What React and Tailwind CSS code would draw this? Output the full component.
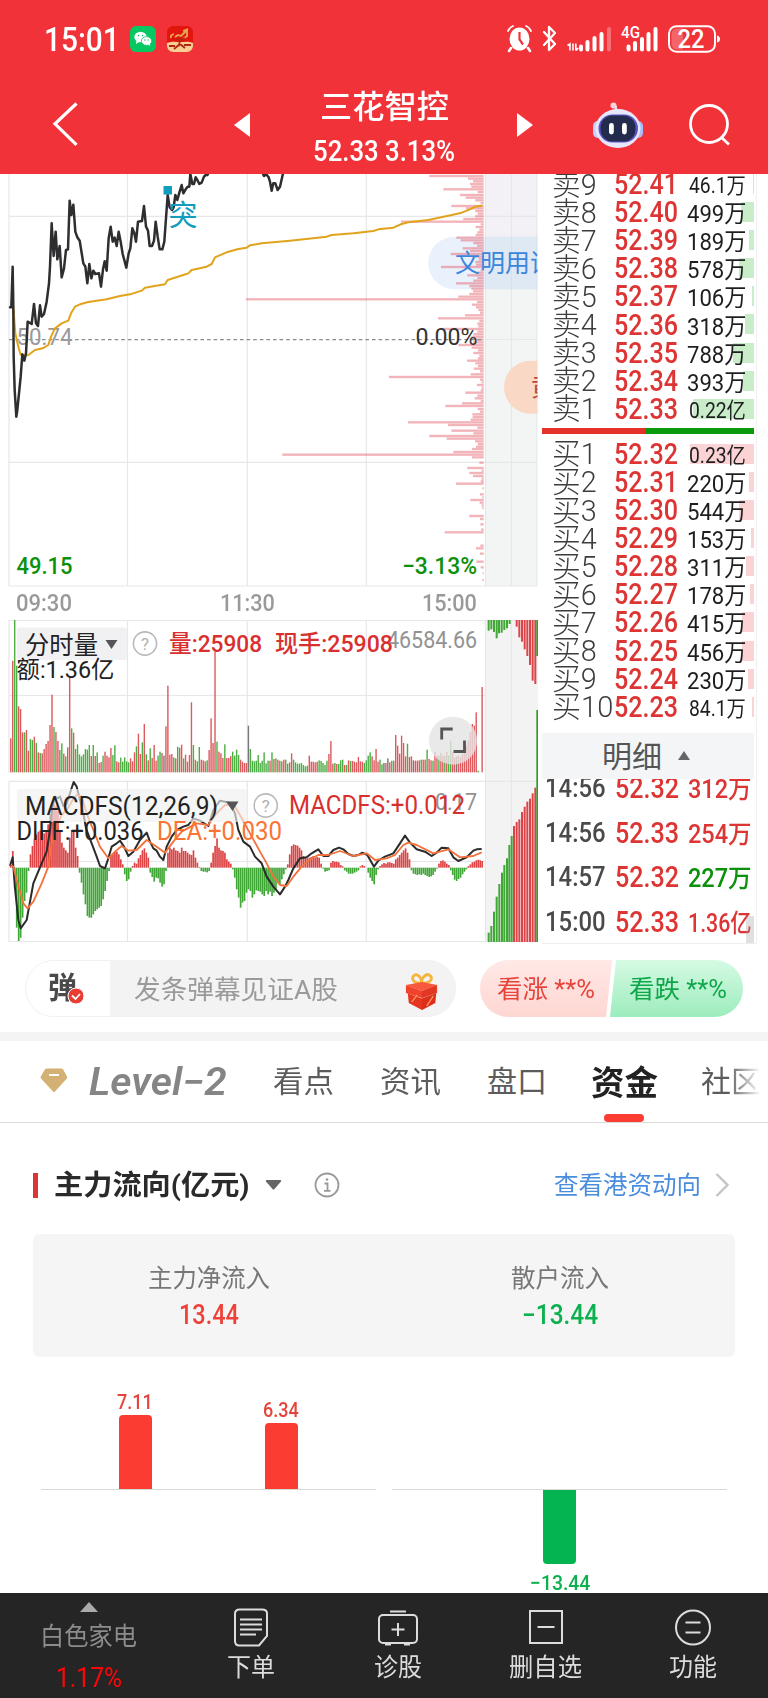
import React, { useLayoutEffect, useRef, useState } from "react"

const RED = "#dc5a5e"
const GREEN = "#4cae43"

const sells = [
  ["卖9", "52.41", "46.1万", 1],
  ["卖8", "52.40", "499万", 13],
  ["卖7", "52.39", "189万", 5],
  ["卖6", "52.38", "578万", 15],
  ["卖5", "52.37", "106万", 2],
  ["卖4", "52.36", "318万", 9],
  ["卖3", "52.35", "788万", 21],
  ["卖2", "52.34", "393万", 11],
  ["卖1", "52.33", "0.22亿", 61]
]

const buys = [
  ["买1", "52.32", "0.23亿", 64],
  ["买2", "52.31", "220万", 5],
  ["买3", "52.30", "544万", 15],
  ["买4", "52.29", "153万", 3],
  ["买5", "52.28", "311万", 8],
  ["买6", "52.27", "178万", 4],
  ["买7", "52.26", "415万", 12],
  ["买8", "52.25", "456万", 12],
  ["买9", "52.24", "230万", 6],
  ["买10", "52.23", "84.1万", 2]
]

const trades = [
  ["14:56", "52.32", "312万", "up"],
  ["14:56", "52.33", "254万", "up"],
  ["14:57", "52.32", "227万", "down"],
  ["15:00", "52.33", "1.36亿", "up"]
]

// volume at price, [y, left end]
const profile = [
  [18, 568], [26, 684], [34, 699], [42, 690], [50, 694], [58, 610], [66, 713], [75, 660], [83, 677],
  [91, 706], [99, 722], [108, 634], [115, 678], [123, 706], [131, 713], [139, 705], [147, 670],
  [155, 483], [163, 722], [171, 707], [179, 718], [187, 712], [195, 707], [203, 649], [211, 662],
  [219, 700], [227, 711], [235, 668], [243, 690], [252, 632], [260, 705], [268, 716], [276, 706],
  [284, 708], [291, 603], [300, 722], [308, 711], [316, 682], [324, 712], [332, 700], [340, 648],
  [348, 688], [356, 694], [364, 699], [372, 688], [380, 655], [388, 18], [396, 711], [404, 696],
  [412, 708], [420, 715], [428, 720], [436, 675], [445, 594], [453, 718], [461, 712], [469, 715],
  [477, 605], [485, 712], [493, 700], [501, 694], [509, 705], [517, 700], [525, 655], [533, 695],
  [541, 714], [549, 700], [557, 718], [565, 714], [572, 681], [580, 706], [588, 714], [596, 702],
  [604, 720], [613, 692], [621, 447], [629, 720], [637, 725], [645, 711], [653, 725], [661, 722],
  [668, 676], [677, 712], [685, 704], [693, 722], [700, 666], [708, 616], [717, 713], [725, 720],
  [733, 697], [741, 698], [749, 692], [757, 504], [765, 624], [773, 712], [782, 634], [790, 700],
  [798, 568], [806, 620], [814, 705], [822, 714], [830, 708], [837, 696], [846, 640], [854, 127],
  [862, 696], [878, 718], [894, 682], [902, 725], [909, 688], [918, 699], [926, 725], [934, 722],
  [941, 648], [955, 727], [973, 720], [982, 727], [990, 691], [998, 719], [1006, 725], [1014, 727],
  [1038, 688], [1047, 720], [1063, 721], [1079, 723], [1087, 614], [1127, 721], [1135, 708],
  [1151, 720], [1175, 709], [1192, 722], [1210, 728], [1230, 727]
]

const volumes = (
  "r102 r335 g460 g320 r198 r190 r120 g120 r127 r65 g100 g97 r107 g88 r60 g58 r57 r70 r85 r94 r142 r233 g136 r121 " +
  "r94 g67 g87 r56 g48 r75 r285 g132 r119 g70 g84 g54 g48 g54 g70 g68 g82 r49 g82 r49 g60 r28 r31 g50 r62 r50 r45 " +
  "r73 g52 g81 r33 r30 g44 g32 g45 g33 g30 r42 r33 r60 g78 r116 r55 g90 r145 g54 r36 g72 r43 r82 r35 g50 g62 r58 " +
  "k50 r138 r260 r53 r55 g45 r42 g77 r74 r83 g42 r53 r32 r52 r210 g82 r38 g33 g76 r38 r36 r33 g36 r67 r162 r88 " +
  "r362 g92 r62 r57 r43 g84 r43 r43 r49 g62 g50 g68 g52 r38 r32 r28 r28 k140 g70 g35 g33 g35 g52 g28 g35 g60 g27 " +
  "g35 r35 g60 r40 g42 r38 g35 r33 r38 g38 g26 r30 r57 g38 g30 g26 g26 g28 g22 g18 g20 r50 r32 r32 r30 r32 g36 " +
  "g34 g28 g22 g35 r55 r94 r26 g28 r25 g25 g36 g38 r22 g22 r36 g34 r34 r32 r30 r46 r33 r32 g28 g36 g50 g60 r48 " +
  "r36 r70 r32 g38 g24 k28 r28 k42 r30 g35 r35 r112 r80 r56 r110 r88 r48 g86 r46 r48 k36 r35 r35 r36 g38 r38 r38 " +
  "g68 r40 r36 g35 r62 r50 g50 r58 r50 g50 r62 g50 g95 r60 r45 k48 r50 r46 r55 r70 r80 r95 r120 r145 r140 r180 " +
  "g5 g0 r256"
).split(" ")

const macd = [
  5, 50, -60, -180, -220, -210, -150, -100, -75, -10, 40, 65, 85, 100, 108, 112, 108, 103, 110, 130, 160, 195,
  190, 185, 170, 112, 75, 60, 52, 45, 90, 113, 110, 60, 35, -15, -45, -80, -110, -145, -150, -150, -140, -130,
  -125, -120, -115, -95, -70, -40, -10, 35, 40, 48, 48, 40, 25, 10, -20, -40, -35, -12, 5, 15, 12, 28, 38, 52,
  58, 45, 30, -15, -28, -42, -30, -32, -45, -57, -50, -10, 45, 60, 55, 60, 52, 50, 45, 60, 50, 50, 45, 40, 38,
  52, 30, 15, 2, -10, -12, -12, -14, -10, 15, 45, 65, 88, 60, 52, 50, 45, 25, 18, 12, -5, -30, -65, -90, -120,
  -105, -100, -75, -65, -70, -90, -80, -68, -70, -72, -80, -85, -70, -80, -72, -85, -75, -65, -45, -50, -35,
  -20, -5, 10, 40, 65, 70, 68, 66, 60, 52, 35, 30, 28, 30, 32, 35, 30, 32, 30, 12, -3, -12, -10, -8, 15, 20, 18,
  18, 16, 8, 4, -8, -12, -18, -18, -18, -15, -12, -8, 4, 8, 5, 0, -15, -30, -40, -50, -22, -5, 5, 10, 14, 12,
  16, 16, 14, 12, 25, 30, 38, 45, 52, 58, 45, 25, -8, -18, -20, -22, -20, -22, -18, -22, -25, -28, -26, -22,
  -12, -3, 12, 20, 22, 18, 12, 8, -8, -22, -36, -40, -34, -30, -20, -12, -5, 5, 10, 16, 18, 22, 24, 22, 20
]

const priceLine =
  "30,412 34,412 38,290 40,412 41,560 44,660 49,740 52,720 56,680 62,620 67,553 73,572 78,550 83,455 95,462 102,402 108,460 114,468 120,406 125,440 132,432 140,395 147,340 150,290 155,160 161,258 167,185 172,268 179,228 185,322 192,295 198,240 204,238 209,92 214,135 220,104 226,185 232,202 239,212 250,280 256,290 262,340 268,282 274,325 280,302 286,312 297,310 303,350 309,298 314,274 320,302 326,205 332,170 338,215 344,203 350,228 356,185 362,215 368,252 379,293 386,250 391,235 397,175 403,190 408,215 414,155 426,153 432,108 438,170 444,182 449,228 456,228 462,212 467,155 473,200 479,238 487,238 493,215 503,75 509,112 516,120 521,112 526,75 532,90 538,68 545,45 550,70 557,58 563,50 568,50 571,12 577,42 582,42 587,22 592,30 598,42 605,38 612,20 617,15 622,15 628,5 700,-60 786,5 792,18 798,12 806,22 810,35 815,62 820,40 826,40 833,60 840,50 848,15 852,0"

const avgLine =
  "40,412 46,490 55,530 62,554 75,556 85,555 105,540 128,535 145,525 153,500 165,475 185,460 205,452 213,430 225,410 240,403 265,396 320,388 360,378 390,373 425,362 435,353 460,349 495,343 503,330 550,315 565,310 575,300 620,290 635,282 645,262 680,247 715,237 740,233 750,226 785,220 870,212 980,200 995,195 1060,190 1120,183 1135,178 1180,173 1205,162 1225,157 1285,150 1345,137 1385,128 1410,118 1425,110 1445,107"

const diffLine =
  "30,858 38,832 45,925 55,1020 62,1045 80,1020 100,910 125,850 140,815 150,750 157,680 165,650 172,655 180,650 190,678 200,672 213,630 221,606 230,620 240,660 250,700 258,745 275,790 290,830 300,858 315,865 325,835 335,800 350,790 360,782 372,800 385,828 400,815 420,780 440,758 450,785 460,805 470,812 480,830 490,840 500,800 515,770 530,750 550,740 565,735 580,715 600,722 625,738 640,690 660,662 690,668 705,700 715,750 730,785 750,800 765,830 785,850 800,890 820,920 840,943 855,920 865,900 880,865 900,835 920,832 935,820 955,808 970,828 985,828 1000,810 1017,803 1030,808 1045,822 1060,828 1075,825 1087,818 1102,825 1122,860 1135,842 1155,830 1180,820 1200,790 1215,767 1230,788 1250,808 1275,815 1295,828 1310,818 1325,803 1345,805 1360,832 1375,843 1400,832 1420,812 1430,808 1445,807"

const deaLine =
  "32,855 40,860 50,900 70,970 83,985 100,965 125,910 145,860 155,790 170,740 185,705 200,690 215,665 230,645 245,650 260,700 280,750 300,800 325,835 345,815 365,798 385,812 410,810 440,780 470,800 495,818 520,785 545,755 590,730 625,735 650,700 675,675 700,672 720,705 750,760 780,815 800,850 820,890 840,915 860,918 880,890 905,860 930,838 955,825 985,825 1020,813 1060,828 1100,820 1125,840 1160,835 1185,825 1210,795 1225,788 1250,795 1300,820 1345,808 1380,832 1420,828 1445,817"

const sideTop = [
  [686, 62], [694, 58], [702, 66], [710, 85], [717, 70], [725, 68], [733, 60], [741, 55], [749, 42], [756, 30],
  [762, 30], [770, 50], [778, 82], [786, 95], [794, 118], [802, 138], [810, 165], [818, 212], [826, 222]
]

const sideBottom = [
  [686, 968], [694, 948], [702, 905], [710, 860], [718, 822], [726, 788], [733, 765], [741, 745], [748, 705],
  [755, 678], [762, 648], [770, 636], [778, 628], [786, 606], [794, 590], [802, 575], [810, 566], [818, 550],
  [826, 533]
]

// squeezes its text to a fixed width, like the condensed face of the app
const Fit = ({ w, className = "", children }) => {
  const ref = useRef(null)
  const [scale, setScale] = useState(1)

  useLayoutEffect(() => {
    if (ref.current) setScale(w / ref.current.offsetWidth)
  }, [w, children])

  return (
    <span className={`flex shrink-0 leading-none ${className}`} style={{ width: w }}>
      <span
        ref={ref}
        className="inline-block shrink-0 origin-left whitespace-nowrap"
        style={{ transform: `scaleX(${scale})` }}
      >
        {children}
      </span>
    </span>
  )
}

const Label = ({ x, y, w, size = 23, fill, children, weight = 500 }) => (
  <text
    x={x}
    y={y}
    textLength={w}
    lengthAdjust="spacingAndGlyphs"
    fontSize={size}
    fontWeight={weight}
    fill={fill}
  >
    {children}
  </text>
)

const Help = ({ x, y }) => (
  <g>
    <circle cx={x} cy={y} r="11.6" fill="none" stroke="#b9b9b9" strokeWidth="1.6" />
    <text x={x} y={y + 6} fontSize="17" textAnchor="middle" fill="#b0b0b0">?</text>
  </g>
)

const StatusBar = () => (
  <div className="flex h-[78px] items-center pl-[44px] text-white">
    <Fit w={76} className="text-[33px] font-medium">15:01</Fit>
    <svg className="ml-[10px]" width="26" height="26" viewBox="0 0 26 26">
      <rect width="26" height="26" rx="6" fill="#06c862" />
      <ellipse cx="10.5" cy="11" rx="6.2" ry="5.2" fill="#fff" />
      <path d="M6.5 14.5 6 18l3.5-2.2z" fill="#fff" />
      <ellipse cx="16.5" cy="15" rx="5.2" ry="4.4" fill="#fff" stroke="#06c862" strokeWidth=".8" />
      <path d="m18 18.5 2.3 1.6-.4-2.8z" fill="#fff" />
      <g fill="#06c862">
        <circle cx="8.5" cy="9.6" r=".8" />
        <circle cx="12.6" cy="9.6" r=".8" />
        <circle cx="14.9" cy="14" r=".7" />
        <circle cx="18.2" cy="14" r=".7" />
      </g>
    </svg>
    <svg className="ml-[11px]" width="26" height="26" viewBox="0 0 26 26">
      <rect width="26" height="26" rx="6" fill="#e3160d" />
      <path d="M0 17c5-2 9-1 13-1s9-1 13 1v3a6 6 0 0 1-6 6H6a6 6 0 0 1-6-6z" fill="#f7cf94" />
      <path d="M4 12q-1-3 3-4M8 11l3-2 3 1 3-3 3-3v6l-4 3M16 5l5-2" fill="none" stroke="#e5a955" strokeWidth="1.8" />
      <path d="M9 13l5 1 4-2M13 13l-1 7M7 23l6-5 5 4M2 20h6M17 19h7" fill="none" stroke="#b3260f" strokeWidth="1.8" />
    </svg>
    <svg className="ml-[312px]" width="216" height="30" viewBox="506 24 216 30">
      <g fill="none" stroke="#fff" strokeLinecap="round">
        <path d="M509 31q2-4 5-5M532 31q-2-4-5-5" strokeWidth="1.8" />
        <path d="m512 48-2 3M529 48l2 3" strokeWidth="2.6" />
        <path d="m545 32 11 12-6 6V27l6 6-11 12" strokeWidth="2.3" strokeLinejoin="round" />
      </g>
      <ellipse cx="520.5" cy="39" rx="10" ry="11.5" fill="#fff" />
      <path d="M520.5 32v7.5l3.5 5" fill="none" stroke="#f13239" strokeWidth="2.2" />
      <path d="M568.500 45.500l2.500-1.500v6.500M574 43.500v7M576.800 50.500v-7M576.800 50.500l2.500-2.500" fill="none" stroke="#fff" strokeWidth="1.6" />
      <g stroke="#fff" strokeWidth="4" strokeLinecap="round">
        <path d="M582 46.500v3M588.500 42v7.500M595.500 38v11.500M602.500 34v15.500" />
        <path d="M610 29v20.500" opacity=".3" />
        <path d="M629.500 46.500v3M636 43v6.500M643 39v10.500M649.500 34v15.500M656.500 29v20.500" />
      </g>
      <Label x={622} y={38} w={19} size={16} fill="#fff">4G</Label>
      <rect x="670" y="26.200" width="46" height="25.500" rx="7.500" fill="none" stroke="#fff" strokeWidth="2" />
      <path d="M684 28.500v21h-6a5.500 5.500 0 0 1-5.500-5.500v-10a5.500 5.500 0 0 1 5.500-5.500z" fill="#fff" opacity=".25" />
      <Label x={678.500} y={47.700} w={27} size={25} fill="#fff">22</Label>
      <path d="M718 35.500q3 .5 3 3.500t-3 3.500z" fill="#fff" />
    </svg>
  </div>
)

const Header = () => (
  <div className="flex h-[96px] items-center text-white">
    <svg className="ml-[52px] mt-[-2px]" width="26" height="46" viewBox="0 0 26 46" fill="none" stroke="#fff" strokeWidth="3.2">
      <path d="M24.500 1.500 3 21.800l21.500 21" />
    </svg>
    <svg className="ml-[156px] mt-[-2px]" width="16" height="24" viewBox="0 0 16 24">
      <path d="M0 12 16 0v24z" fill="#fff" />
    </svg>
    <div className="ml-[63px] flex w-[142px] flex-col items-center pt-[4px]">
      <Fit w={129} className="text-[32px] font-medium">三花智控</Fit>
      <Fit w={142} className="mt-[14px] text-[29px] font-medium">52.33 3.13%</Fit>
    </div>
    <svg className="ml-[62px] mt-[-2px]" width="16" height="24" viewBox="0 0 16 24">
      <path d="M16 12 0 0v24z" fill="#fff" />
    </svg>
    <svg className="ml-[60px] mt-[-3px]" width="50" height="46" viewBox="0 0 50 46">
      <path d="M24.500 10q-2-2.500-2-6" fill="none" stroke="#e5e0f5" strokeWidth="2.500" />
      <circle cx="20.500" cy="3.500" r="3" fill="#fbd3dc" />
      <rect x="0" y="19" width="10" height="17" rx="5" fill="#c5d0fa" />
      <rect x="40" y="19" width="10" height="17" rx="5" fill="#a9bdf8" />
      <ellipse cx="25" cy="26.500" rx="22.500" ry="19.500" fill="#e7e7fb" />
      <rect x="5.500" y="12.500" width="39.500" height="28" rx="14" fill="#5b54c8" />
      <rect x="7.500" y="13.500" width="35" height="26" rx="12" fill="#232c4d" />
      <rect x="16" y="21" width="4.800" height="11.500" rx="2.400" fill="#fff" />
      <rect x="29" y="21" width="4.800" height="11.500" rx="2.400" fill="#fff" />
    </svg>
    <svg className="ml-[45px] mt-[-2px]" width="44" height="44" viewBox="0 0 44 44" fill="none" stroke="#fff" strokeWidth="2.8">
      <circle cx="21" cy="21" r="18.500" />
      <path d="m33.500 34.500 7.500 7" />
    </svg>
  </div>
)

const PriceChart = () => (
  <svg className="block" width="540" height="413" viewBox="0 174 540 413">
    <clipPath id="plot">
      <rect x="0" y="174" width="537.500" height="413" />
    </clipPath>
    <g clipPath="url(#plot)">
      <rect x="485" y="174" width="53" height="412" fill="#f3f4f4" />
      <rect x="485" y="174" width="53" height="63" fill="#f3f1f5" />
      <g stroke="#e6e7ea" strokeWidth="1.2">
        <path d="M9 174v412M127.500 174v412M247.300 174v412M366.300 174v412M485.500 174v412M511.500 174v412M537 174v412" />
        <path d="M9 216.300h528M485 339.500h52M9 462.300h528M9 586h528" />
      </g>
      <rect x="428.300" y="236.700" width="140" height="52.500" rx="26" fill="#b4d2f5" fillOpacity=".3" />
      <rect x="504" y="360.700" width="100" height="53" rx="26.500" fill="#f9d9c5" />
      <g transform="translate(240 170) scale(.33333)" fill="#e66873" fillOpacity=".5">
        {profile.map(([y, x]) => (
          <rect key={y} x={x} y={y - 3.5} width={731 - x} height="7" />
        ))}
      </g>
      <path d="M9 339.700h475" stroke="#8c8c8c" strokeWidth="1.3" strokeDasharray="3.6 3" />
      <Label x={16.500} y={344.500} w={56} size={24} weight={400} fill="#999">50.74</Label>
      <g transform="translate(0 170) scale(.33333)" fill="none" strokeLinejoin="round" strokeLinecap="round">
        <polyline points={avgLine} stroke="#e2a31c" strokeWidth="6" />
        <polyline points={priceLine} stroke="#2e2e30" strokeWidth="7.500" />
      </g>
      <rect x="163.500" y="186" width="8.500" height="8.500" fill="#129dbd" />
      <Label x={168.500} y={225.500} w={29} size={29} weight={400} fill="#129dbd">突</Label>
      <Label x={455} y={271.500} w={100} size={25} weight={400} fill="#3b86dc">文明用语</Label>
      <text x="531" y="396" fontSize="25" fill="#b8473f">黄</text>
      <Label x={415.500} y={344.500} w={62} size={24} weight={400} fill="#333">0.00%</Label>
      <Label x={16.500} y={573.500} w={56} fill="#0b910b">49.15</Label>
      <Label x={402} y={573.500} w={75} fill="#0b910b">−3.13%</Label>
    </g>
  </svg>
)

const TimeAxis = () => (
  <div className="flex h-[33px] w-[540px] items-center pb-[2px] pl-[16px] text-[24px] font-medium text-[#999]">
    <Fit w={56}>09:30</Fit>
    <Fit w={55} className="ml-[148px]">11:30</Fit>
    <Fit w={55} className="ml-[147px]">15:00</Fit>
  </div>
)

const IndicatorCharts = () => (
  <svg className="block" width="540" height="324" viewBox="0 620 540 324">
    <rect x="485" y="620" width="53" height="322" fill="#f3f3f4" />
    <g stroke="#e6e7ea" strokeWidth="1.2" fill="none">
      <path d="M9 620v152.500M127.500 620v152.500M247.300 620v152.500M366.300 620v152.500M485.500 620v322" />
      <path d="M9 620.500h528M9 695.500h476M9 781.300h528M9 861.500h476M9 941.500h528" />
      <path d="M9 781v161M127.500 781v161M247.300 781v161M366.300 781v161M511.500 620v322" />
    </g>

    <g transform="translate(0 580) scale(.33333)">
      {volumes.map((v, i) => {
        const h = Number(v.slice(1))
        const color = { r: RED, g: GREEN, k: "#77777c" }[v[0]]
        return <rect key={i} x={30.2 + i * 5.892} y={577 - h} width="4.2" height={h} fill={color} />
      })}
      {macd.map((v, i) => (
        <rect
          key={i}
          x={30 + i * 5.892}
          y={v > 0 ? 863 - v : 863}
          width="5"
          height={Math.abs(v)}
          fill={v > 0 ? "#dd4244" : "#40a636"}
        />
      ))}
      <g fill="none" strokeLinejoin="round">
        <polyline points={diffLine} stroke="#2b2b2b" strokeWidth="6" />
        <polyline points={deaLine} stroke="#f3713a" strokeWidth="5.500" />
      </g>
    </g>

    <g transform="translate(260 610) scale(.33333)">
      {sideTop.map(([x, y]) => (
        <rect key={x} x={x - 3} y="28" width="6" height={y - 28} fill={x < 760 ? "#40a636" : "#dd4448"} />
      ))}
      {sideBottom.map(([x, y]) => (
        <rect key={x} x={x - 3} y={y} width="6" height={996 - y} fill={x < 760 ? "#40a636" : "#dd4448"} />
      ))}
      <rect x="829" y="28" width="5" height="110" fill="#2f9d28" />
      <rect x="829" y="300" width="5" height="696" fill="#2f9d28" />
    </g>

    <rect x="17" y="627.500" width="110" height="32.500" rx="3" fill="#efeef2" fillOpacity=".85" />
    <Label x={25} y={653.500} w={73} size={25} weight={400} fill="#222">分时量</Label>
    <path d="M105.500 640h12l-6 9z" fill="#555" />
    <Help x={145} y={643.500} />
    <Label x={16.500} y={677.500} w={98} size={24} weight={400} fill="#222">额:1.36亿</Label>
    <Label x={387} y={647.500} w={90} size={24} weight={400} fill="#929292">46584.66</Label>
    <Label x={169} y={651.500} w={93} size={24} fill="#d8302f">量:25908</Label>
    <Label x={275} y={651.500} w={118} size={24} fill="#d8302f">现手:25908</Label>

    <circle cx="453" cy="740.700" r="24" fill="#e3e3e4" fillOpacity=".8" />
    <path d="M441.700 739.500v-10.500h11M464.500 740.500V751.500h-11" fill="none" stroke="#555" strokeWidth="2.8" />

    <rect x="17" y="789" width="230" height="33" rx="3" fill="#efeff0" fillOpacity=".65" />
    <Label x={25} y={815} w={193} size={25} weight={400} fill="#222">MACDFS(12,26,9)</Label>
    <path d="M226 801.500h12.500l-6 9.500z" fill="#555" />
    <Help x={265.700} y={805.500} />
    <Label x={435} y={809.500} w={42} size={24} weight={400} fill="#929292">0.17</Label>
    <Label x={289} y={813.500} w={176} size={25} weight={400} fill="#d8302f">MACDFS:+0.012</Label>
    <Label x={16.500} y={840} w={127} size={25} weight={400} fill="#222">DIFF:+0.036</Label>
    <Label x={157} y={840} w={125} size={25} weight={400} fill="#fa7433">DEA:+0.030</Label>
  </svg>
)

const BookRow = ({ row, side }) => {
  const [label, price, amount, depth] = row
  return (
    <div className="relative flex h-[28.1px] items-center pl-[10px]">
      <span
        className={`absolute right-[2px] top-[4px] h-[20px] ${side === "sell" ? "bg-[#c9ecc9]" : "bg-[#fbd3d4]"}`}
        style={{ width: depth }}
      />
      <Fit w={label.length > 2 ? 61 : 45} className="pt-[1px] text-[30px] font-light text-[#3c3c3e]">{label}</Fit>
      <div className="relative ml-auto flex items-center pr-[10px]">
        <Fit w={64} className="pt-[1px] text-[29px] font-medium text-[#dd3434]">{price}</Fit>
        <Fit w={amount.length > 4 ? 57 : 59} className={`${amount.length > 4 ? "ml-[11px] text-[22px]" : "ml-[9px] text-[24px]"} pt-[4px] text-[#1e1e20]`}>
          {amount}
        </Fit>
      </div>
    </div>
  )
}

const OrderBook = () => (
  <div className="flex h-[770px] w-[215px] flex-col overflow-hidden border-r border-[#f0f0f0]">
    <div className="-mt-[4px] shrink-0">
      {sells.map((row) => (
        <BookRow key={row[0]} row={row} side="sell" />
      ))}
    </div>
    <div className="mr-[2px] mt-[5px] flex h-[6px] shrink-0">
      <div className="w-[103px] bg-[#e4322b]" />
      <div className="flex-1 bg-[#0b9a0b]" />
    </div>
    <div className="mt-[6px] shrink-0">
      {buys.map((row) => (
        <BookRow key={row[0]} row={row} side="buy" />
      ))}
    </div>
    <div className="mr-[2px] mt-[12px] flex h-[46px] shrink-0 items-center bg-[#f4f5f7] pl-[60px]">
      <Fit w={60} className="pt-[3px] text-[30px] text-[#555]">明细</Fit>
      <svg className="ml-[16px]" width="12" height="9" viewBox="0 0 12 9">
        <path d="M6 0l6 9H0z" fill="#666" />
      </svg>
    </div>
    <div className="relative min-h-0 flex-1 overflow-hidden border-b border-[#eee]">
      <div className="-mt-[13px]">
        {trades.map(([time, price, amount, dir], i) => (
          <div key={i} className="flex h-[44.500px] items-center pl-[3px]">
            <Fit w={61} className="pt-[1px] text-[27px] font-medium text-[#4a4a4c]">{time}</Fit>
            <Fit w={64} className="ml-[9px] pt-[1px] text-[29px] font-medium text-[#dd3434]">{price}</Fit>
            <Fit w={64} className={`ml-[9px] pt-[3px] text-[25px] font-medium ${dir === "up" ? "text-[#dd3434]" : "text-[#0b910b]"}`}>
              {amount}
            </Fit>
          </div>
        ))}
      </div>
      <div className="absolute bottom-0 right-[2px] h-[27px] w-[8px] bg-[#999]/30" />
    </div>
  </div>
)

const Gift = () => (
  <svg width="34" height="38" viewBox="0 0 36 38" preserveAspectRatio="none">
    <path d="M17.500 10C10 11 6 6 9 3s8 0 8.500 6C19 2 24 0 27 3s-1 8-9.500 7z" fill="none" stroke="#f4b63c" strokeWidth="3" />
    <path d="m1 12 17-3 16 3-16 6z" fill="#f7593c" />
    <path d="M1 12l17 6v7L1 20zM34 12l-16 6v7l16-5z" fill="#f0432c" />
    <path d="M3 20.500l15 5V37L4 30zM33 20.500l-15 5V37l14-7z" fill="#e5361f" />
    <path d="M18 18v19l14-7 1-9.500V12z" fill="#c92112" opacity=".35" />
    <path d="m7 29 6-7M23 33l7-10" stroke="#ff8a5c" strokeWidth="1.500" />
  </svg>
)

const DanmakuBar = () => (
  <div className="flex h-[88px] items-center pl-[25px] pt-[1px]">
    <div className="flex h-[57px] w-[431px] items-center overflow-hidden rounded-full border border-[#f1f1f1] bg-[#f3f3f3]">
      <div className="relative flex h-full w-[84px] items-center bg-white pl-[22px]">
        <Fit w={29} className="pb-[2px] text-[30px] font-bold text-[#4a4a4a]">弹</Fit>
        <svg className="absolute left-[41px] top-[26px]" width="18" height="18" viewBox="0 0 18 18">
          <circle cx="9" cy="9" r="8" fill="#ea3c33" stroke="#fff" />
          <path d="m5 8.500 3.500 3.500 4.500-5" fill="none" stroke="#fff" strokeWidth="1.8" />
        </svg>
      </div>
      <Fit w={204} className="ml-[24px] pt-[3px] text-[26px] text-[#9a9a9a]">发条弹幕见证A股</Fit>
      <div className="ml-[67px] pt-[6px]">
        <Gift />
      </div>
    </div>
    <div className="ml-[24px] flex h-[57px] w-[263px] overflow-hidden rounded-full">
      <div className="flex w-[132px] items-center bg-linear-to-b from-[#ffe9e7] to-[#fed6d2] pl-[17px] [clip-path:polygon(0_0,100%_0,95.5%_100%,0_100%)]">
        <Fit w={98} className="pt-[1px] text-[25px] text-[#e8443c]">看涨 **%</Fit>
      </div>
      <div className="-ml-[2px] flex flex-1 items-center bg-linear-to-b from-[#d5fae4] to-[#9cecbd] pl-[19px] [clip-path:polygon(4.5%_0,100%_0,100%_100%,0_100%)]">
        <Fit w={98} className="pt-[1px] text-[25px] text-[#10a74b]">看跌 **%</Fit>
      </div>
    </div>
  </div>
)

const Tabs = () => (
  <div className="flex h-[82px] items-center border-b border-[#dcdcdc] pl-[40px] text-[30px] text-[#5c5c5c]">
    <svg className="-mt-[2px]" width="28" height="25" viewBox="0 0 28 25">
      <path d="M7 .5h14q1.500 0 2.300 1.300L27 8.500q.6 1-.2 2L15 23.500q-1 1-2 0L1 10.500q-.8-1-.2-2L4.700 1.800Q5.500.5 7 .5z" fill="#d3b073" />
      <path d="M9 7h10" stroke="#fff" strokeWidth="2" />
    </svg>
    <Fit w={138} className="ml-[21px] text-[38px] font-semibold italic text-[#858585]">Level−2</Fit>
    <Fit w={61} className="ml-[46px] pt-[1px]">看点</Fit>
    <Fit w={61} className="ml-[46px] pt-[1px]">资讯</Fit>
    <Fit w={60} className="ml-[46px] pt-[1px]">盘口</Fit>
    <div className="relative ml-[44px] flex h-full items-center">
      <Fit w={67} className="pt-[2px] text-[34px] font-bold text-[#222]">资金</Fit>
      <div className="absolute bottom-0 left-[13px] h-[8px] w-[40px] rounded-[4px] bg-[#fa3c32]" />
    </div>
    <div className="ml-[43px] w-[60px] [mask-image:linear-gradient(to_right,#000_45%,transparent)]">
      <Fit w={60} className="pt-[1px]">社区</Fit>
    </div>
  </div>
)

const FlowSection = () => (
  <section className="h-[470px] overflow-hidden">
    <div className="flex h-[124px] items-center pl-[33px]">
      <div className="h-[25px] w-[5px] bg-[#dd3434]" />
      <Fit w={196} className="ml-[16px] pt-[2px] text-[28px] font-bold text-[#2a2a2a]">主力流向(亿元)</Fit>
      <svg className="ml-[15px]" width="17" height="10" viewBox="0 0 17 10">
        <path d="M2 0h13q2 0 1 1.500L9.500 9q-1 1-2 0L1 1.500Q0 0 2 0z" fill="#666" />
      </svg>
      <svg className="ml-[32px]" width="26" height="26" viewBox="0 0 26 26" fill="none" stroke="#999" strokeWidth="1.8">
        <circle cx="13" cy="13" r="11.500" />
        <path d="M10.500 11.500H13.500v7M10 18.800h6.500" />
        <circle cx="13" cy="7.500" r="1.300" fill="#999" stroke="none" />
      </svg>
      <Fit w={147} className="ml-[214px] pt-[1px] text-[25px] text-[#4a8ddd]">查看港资动向</Fit>
      <svg className="ml-[14px]" width="15" height="24" viewBox="0 0 15 24" fill="none" stroke="#c4c4c4" strokeWidth="2.400">
        <path d="m1.500 1 11 11-11 11" />
      </svg>
    </div>

    <div className="ml-[33px] mt-[-13px] grid h-[123px] w-[702px] grid-cols-2 rounded-[6px] bg-[#f5f5f5]">
      <div className="flex flex-col items-center pt-[32px]">
        <Fit w={122} className="text-[25px] text-[#777]">主力净流入</Fit>
        <Fit w={60} className="mt-[11px] text-[27px] font-medium text-[#ee4238]">13.44</Fit>
      </div>
      <div className="flex flex-col items-center pt-[32px]">
        <Fit w={98} className="text-[25px] text-[#777]">散户流入</Fit>
        <Fit w={76} className="mt-[11px] text-[27px] font-medium text-[#0cb04e]">−13.44</Fit>
      </div>
    </div>

    <div className="ml-[41px] flex h-[235px] gap-[16px]">
      <div className="flex h-[133px] w-[335px] items-end border-b border-[#d9d9d9] pl-[76px]">
        <div className="flex w-[36px] flex-col items-center">
          <Fit w={36} className="text-[21px] font-medium text-[#e5433b]">7.11</Fit>
          <div className="mt-[2px] h-[74px] w-[33px] rounded-t-[4px] bg-[#fa3c32]" />
        </div>
        <div className="ml-[110px] flex w-[36px] flex-col items-center">
          <Fit w={36} className="text-[21px] font-medium text-[#e5433b]">6.34</Fit>
          <div className="mt-[2px] h-[66px] w-[33px] rounded-t-[4px] bg-[#fa3c32]" />
        </div>
      </div>
      <div className="mt-[132px] flex h-[110px] w-[335px] flex-col items-center border-t border-[#d9d9d9]">
        <div className="h-[74px] w-[33px] rounded-b-[4px] bg-[#04b451]" />
        <Fit w={60} className="mt-[9px] text-[21px] font-medium text-[#0cb04e]">−13.44</Fit>
      </div>
    </div>
  </section>
)

const NavItem = ({ label, w, children }) => (
  <div className="flex w-[147.500px] flex-col items-center">
    <svg width="40" height="40" viewBox="0 0 40 40" fill="none" stroke="#dcdcdc" strokeWidth="2">
      {children}
    </svg>
    <Fit w={w} className="mt-[8px] text-[25px] text-[#dcdcdc]">{label}</Fit>
  </div>
)

const BottomNav = () => (
  <nav className="flex h-[106px] bg-[#252525]">
    <div className="flex w-[177px] flex-col items-center pt-[9px]">
      <svg width="18" height="10" viewBox="0 0 18 10">
        <path d="M9 0l9 10H0z" fill="#aaa" />
      </svg>
      <Fit w={97} className="mt-[12px] text-[25px] text-[#8c8c8c]">白色家电</Fit>
      <Fit w={66} className="mt-[15px] text-[28px] text-[#fb0707]">1.17%</Fit>
    </div>
    <div className="flex pt-[14px]">
      <NavItem label="下单" w={48}>
        <path d="M8.500 2.500h22.500q5 0 5 4V29l-8 9.500H8.500q-4.500 0-4.500-4.500V7q0-4.500 4.500-4.500z" />
        <path d="M9 12.500h22M9 17.500h22M9 22.500h22M9 27.500h16" />
      </NavItem>
      <NavItem label="诊股" w={48}>
        <rect x="1" y="8" width="38" height="28" rx="4" />
        <path d="M12 4.500h16M20 16v13M13.500 22.500h13M7 37.500h6M26 37.500h6" />
      </NavItem>
      <NavItem label="删自选" w={73}>
        <path d="M4 4h32v32H4zM11.500 20h17" />
      </NavItem>
      <NavItem label="功能" w={48}>
        <circle cx="20" cy="20.500" r="17" />
        <path d="M12.500 15.500h15M12.500 25.500h15" />
      </NavItem>
    </div>
  </nav>
)

const App = () => {
  return (
    <main className="h-[1698px] w-[768px] overflow-hidden bg-white font-['Roboto','Noto_Sans_CJK_SC',sans-serif]">
      <header className="h-[174px] bg-[#f13239]">
        <StatusBar />
        <Header />
      </header>
      <div className="flex h-[770px]">
        <div className="w-[542px]">
          <PriceChart />
          <TimeAxis />
          <IndicatorCharts />
        </div>
        <OrderBook />
      </div>
      <DanmakuBar />
      <div className="h-[9px] bg-[#f4f4f4]" />
      <Tabs />
      <FlowSection />
      <BottomNav />
    </main>
  )
}

export default App
